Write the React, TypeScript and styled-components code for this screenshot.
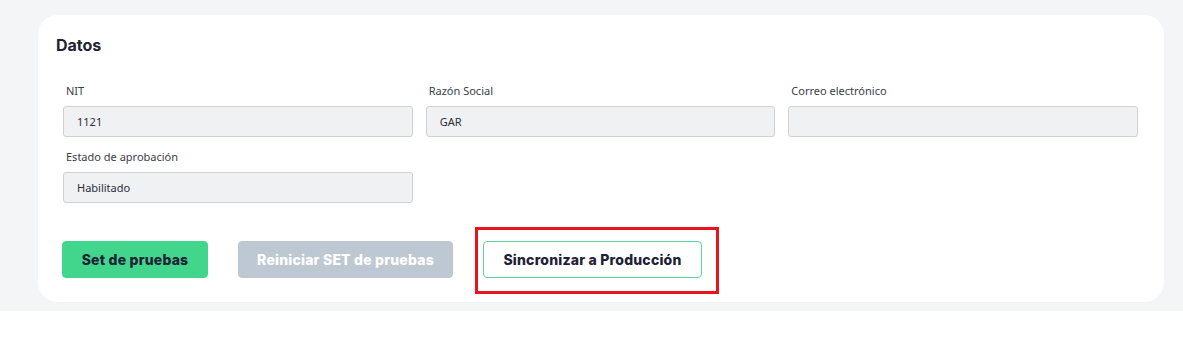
import styled, { createGlobalStyle } from 'styled-components';

const GlobalStyle = createGlobalStyle`
  * { box-sizing: border-box; }
  body {
    margin: 0;
    background: #fff;
    font-family: 'Noto Sans', 'Liberation Sans', sans-serif;
  }
`;

//Styles
const Page = styled.div`
  background-color: #f4f5f7;
  padding: 15px 19px 9px 38px;
`;
const Card = styled.section`
  background-color: #fff;
  border-radius: 20px;
  padding: 20px 26px 24px 25px;
`;
const Title = styled.h3`
  margin: 0 0 28px -7px;
  font-family: Inter, 'Liberation Sans', sans-serif;
  font-size: 16px;
  font-weight: 700;
  color: #1f2235;
  line-height: 20px;
`;
const Grid = styled.div`
  display: grid;
  grid-template-columns: repeat(3, 1fr);
  column-gap: 13px;
  row-gap: 12px;
`;
const Field = styled.div`
  display: flex;
  flex-direction: column;
`;
const Label = styled.label`
  font-size: 11px;
  color: #3a3d48;
  line-height: 15px;
  padding-left: 3px;
  margin-bottom: 8px;
`;
const Input = styled.input`
  height: 31px;
  width: 100%;
  border: 1px solid #cfd1d4;
  border-radius: 3px;
  background-color: #f0f1f3;
  padding: 0 13px;
  font-family: 'Noto Sans', 'Liberation Sans', sans-serif;
  font-size: 11px;
  color: #2c2f3a;
  outline: none;
`;
const Actions = styled.div`
  display: flex;
  align-items: center;
  gap: 30px;
  margin: 38px 0 0 -1px;
`;
const Button = styled.button<{ $variant: 'primary' | 'disabled' | 'outline'; $width: number }>`
  width: ${({ $width }) => $width}px;
  height: 37px;
  padding: 0;
  border-radius: 4px;
  font-family: Inter, 'Liberation Sans', sans-serif;
  font-size: 14px;
  font-weight: 800;
  letter-spacing: 0.2px;
  cursor: pointer;
  border: 1px solid
    ${({ $variant }) =>
      $variant === 'primary' ? '#42d68c' : $variant === 'disabled' ? '#bec8d2' : '#5fd497'};
  background-color: ${({ $variant }) =>
    $variant === 'primary' ? '#42d68c' : $variant === 'disabled' ? '#bec8d2' : '#fff'};
  color: ${({ $variant }) => ($variant === 'disabled' ? '#fff' : '#1f2235')};
`;
const Highlight = styled.div`
  position: relative;
  &::after {
    content: '';
    position: absolute;
    top: -14px;
    left: -8px;
    right: -17px;
    bottom: -16px;
    border: 3px solid #e8141c;
    pointer-events: none;
  }
`;

const fields = [
  { label: 'NIT', value: '1121' },
  { label: 'Razón Social', value: 'GAR' },
  { label: 'Correo electrónico', value: '' },
  { label: 'Estado de aprobación', value: 'Habilitado' },
];

const App = () => {
  return (
    <>
      <GlobalStyle />
      <Page>
        <Card>
          <Title>Datos</Title>
          <Grid>
            {fields.map((f) => (
              <Field key={f.label}>
                <Label>{f.label}</Label>
                <Input value={f.value} readOnly disabled />
              </Field>
            ))}
          </Grid>
          <Actions>
            <Button $variant='primary' $width={146}>Set de pruebas</Button>
            <Button $variant='disabled' $width={215}>Reiniciar SET de pruebas</Button>
            <Highlight>
              <Button $variant='outline' $width={219}>Sincronizar a Producción</Button>
            </Highlight>
          </Actions>
        </Card>
      </Page>
    </>
  );
};

export default App;
